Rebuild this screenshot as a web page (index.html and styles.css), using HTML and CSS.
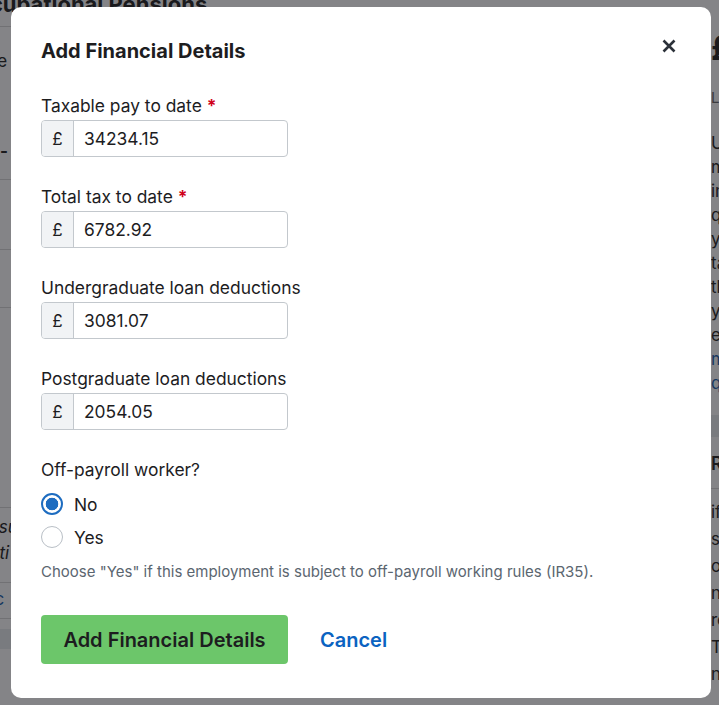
FILE: index.html
```html
<!DOCTYPE html>
<html>
<head>
<meta charset="utf-8">
<link rel="stylesheet" href="styles.css">
</head>
<body>
<div class="page">
  <div class="left-col">
    <h2 class="bg-heading">Occupational Pensions</h2>
    <div class="bg-row r1">
      <div class="bg-name">Name</div>
      <div class="bg-dash">-</div>
    </div>
    <div class="bg-row r2"></div>
    <div class="bg-row r3"></div>
    <div class="bg-row r4"></div>
    <div class="bg-row r5">
      <div class="bg-italic">Pension su</div>
      <div class="bg-italic">Contributi n</div>
    </div>
    <div class="bg-row r6">Acc</div>
    <div class="bg-band"></div>
  </div>
  <div class="right-col">
    <div class="bg-big">£</div>
    <div class="bg-sub">Last</div>
    <p class="bg-para">Use<br>more<br>in<br>q<br>you<br>tax<br>the<br>you<br>est</p>
    <p class="bg-para link">more<br>qu</p>
    <div class="bg-band2"></div>
    <div class="bg-r">R</div>
    <p class="bg-para second">if<br>sub<br>off<br>n<br>re<br>T<br>nc</p>
  </div>
</div>
<div class="overlay">
  <div class="modal">
    <div class="modal-header">
      <h1 class="modal-title">Add Financial Details</h1>
      <button class="close-btn" aria-label="Close">
        <svg width="14" height="14" viewBox="0 0 14 14"><path d="M1.5 1.5 L12.5 12.5 M12.5 1.5 L1.5 12.5" stroke="#2b3139" stroke-width="2.6" stroke-linecap="butt" fill="none"/></svg>
      </button>
    </div>
    <div class="field">
      <label class="label">Taxable pay to date <span class="req">*</span></label>
      <div class="input-group"><span class="addon">£</span><span class="input">34234.15</span></div>
    </div>
    <div class="field">
      <label class="label">Total tax to date <span class="req">*</span></label>
      <div class="input-group"><span class="addon">£</span><span class="input">6782.92</span></div>
    </div>
    <div class="field">
      <label class="label">Undergraduate loan deductions</label>
      <div class="input-group"><span class="addon">£</span><span class="input">3081.07</span></div>
    </div>
    <div class="field">
      <label class="label">Postgraduate loan deductions</label>
      <div class="input-group"><span class="addon">£</span><span class="input">2054.05</span></div>
    </div>
    <div class="field radios">
      <div class="label">Off-payroll worker?</div>
      <div class="radio-row"><span class="radio checked"></span><span class="radio-label">No</span></div>
      <div class="radio-row"><span class="radio"></span><span class="radio-label">Yes</span></div>
      <div class="help">Choose "Yes" if this employment is subject to off-payroll working rules (IR35).</div>
    </div>
    <div class="actions">
      <button class="btn-primary">Add Financial Details</button>
      <a class="cancel">Cancel</a>
    </div>
  </div>
</div>
</body>
</html>
```

FILE: styles.css
```css
* { box-sizing: border-box; }
html, body { margin: 0; padding: 0; }
body {
  width: 719px;
  height: 705px;
  overflow: hidden;
  font-family: "Inter", "Liberation Sans", sans-serif;
  background: #fff;
  color: #222;
}
.page {
  display: flex;
  height: 705px;
  width: 719px;
  overflow: hidden;
}
.left-col {
  width: 710px;
  flex: none;
}
.bg-heading {
  margin: -10px 0 0 -40px;
  font-size: 22px;
  font-weight: 700;
  line-height: 28px;
  height: 37px;
  border-bottom: 1px solid #d8d8d8;
}
.bg-row {
  border-bottom: 1px solid #d8d8d8;
  font-size: 17px;
}
.r1 { height: 153px; padding-top: 22px; }
.bg-name { margin-left: -40px; line-height: 24px; }
.bg-dash { font-weight: 700; margin-top: 66px; line-height: 24px; }
.r2 { height: 70px; }
.r3 { height: 58px; }
.r4 { height: 200px; }
.r5 { height: 75px; padding-top: 6px; }
.bg-italic { font-style: italic; margin-left: -70px; line-height: 26px; }
.r6 { height: 36px; color: #1b5fae; padding-top: 6px; margin-left: -27px; }
.bg-band { height: 20px; background: #e9ecef; margin-top: 10px; }
.right-col {
  padding-left: 1px;
  width: 120px;
  flex: none;
}
.bg-big { font-size: 34px; font-weight: 700; margin-top: 28px; line-height: 40px; }
.bg-sub { font-size: 15px; color: #666; margin-top: 20px; }
.bg-para { font-size: 17px; line-height: 24px; margin: 24px 0 0 0; }
.bg-para.link { color: #1b5fae; margin-top: 0; }
.bg-band2 { height: 22px; background: #e9ecef; margin-top: 20px; }
.bg-r { font-size: 18px; font-weight: 600; padding: 16px 0 14px 0; border-bottom: 1px solid #d8d8d8; }
.bg-para.second { margin-top: 10px; line-height: 27px; }

.overlay {
  position: fixed;
  inset: 0;
  background: rgba(20, 20, 24, 0.52);
}
.modal {
  position: absolute;
  left: 11px;
  top: 7px;
  width: 700px;
  height: 691px;
  background: #fff;
  border-radius: 10px;
  padding: 30px 30px 0 30px;
}
.modal-header {
  display: flex;
  justify-content: space-between;
  align-items: flex-start;
  margin-bottom: 29px;
}
.modal-title {
  margin: 0;
  font-size: 20px;
  font-weight: 700;
  color: #1d1d1f;
  line-height: 28px;
}
.close-btn {
  border: 0;
  background: none;
  padding: 0;
  margin: 2px 5px 0 0;
  width: 14px;
  height: 14px;
  display: flex;
}
.field {
  margin-bottom: 28px;
}
.label {
  display: block;
  font-size: 17.4px;
  line-height: 24px;
  color: #1d1d1f;
  margin-bottom: 2px;
}
.req { color: #d0021b; font-weight: 700; }
.input-group {
  display: flex;
  width: 247px;
  height: 37px;
  border: 1px solid #c3c8cd;
  border-radius: 4px;
  overflow: hidden;
}
.addon {
  width: 32px;
  background: #f1f3f5;
  border-right: 1px solid #c3c8cd;
  display: flex;
  align-items: center;
  justify-content: center;
  font-size: 17px;
  color: #1d1d1f;
}
.input {
  flex: 1;
  display: flex;
  align-items: center;
  padding-left: 10px;
  font-size: 17.4px;
  color: #1d1d1f;
}
.radios { margin-bottom: 0; }
.radios .label { margin-bottom: 11px; }
.radio-row {
  display: flex;
  align-items: center;
  gap: 11px;
  height: 22px;
  margin-bottom: 11px;
}
.radio {
  width: 22px;
  height: 22px;
  border-radius: 50%;
  border: 1px solid #b9bfc6;
  background: #fff;
  flex: none;
}
.radio.checked {
  border: 2px solid #1d6cc0;
  background: radial-gradient(circle, #1d6cc0 0 6px, #fff 6.6px);
}
.radio-label {
  font-size: 17.4px;
  color: #1d1d1f;
}
.help {
  font-size: 15px;
  line-height: 20px;
  color: #5b6670;
  margin-top: 14px;
}
.actions {
  display: flex;
  align-items: center;
  gap: 32px;
  margin-top: 33px;
}
.btn-primary {
  width: 247px;
  height: 49px;
  border: 0;
  border-radius: 4px;
  background: #6cc66a;
  font-family: inherit;
  font-size: 20px;
  font-weight: 600;
  color: #1d1d1f;
}
.cancel {
  font-size: 20px;
  font-weight: 600;
  color: #0b63c1;
}
```
